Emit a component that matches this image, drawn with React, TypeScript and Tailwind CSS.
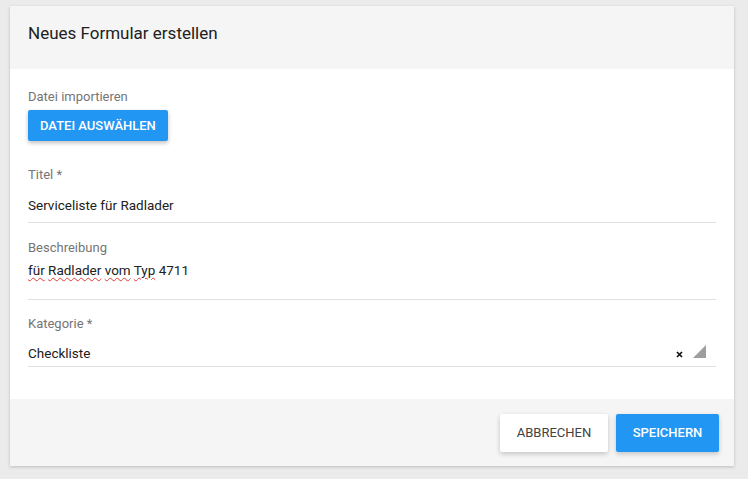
import React from "react";

export default function App() {
  return (
    <div
      className="w-[748px] h-[479px] bg-[#ebebeb] pt-[6px] pl-[10px]"
      style={{ fontFamily: "Roboto, 'Noto Sans', Arial, sans-serif" }}
    >
      <div className="w-[724px] bg-white shadow-[0_1px_3px_rgba(0,0,0,0.2)]">
        <div className="h-[63px] bg-[#f5f5f5] pt-[15px] px-[18px]">
          <div className="text-[17px] leading-[24px] text-[#212121]">Neues Formular erstellen</div>
        </div>
        <div className="px-[18px] pt-[20px] pb-[32px]">
          <div className="text-[13px] leading-[16px] text-[#757575]">Datei importieren</div>
          <button className="mt-[5px] h-[31px] px-[12px] bg-[#2196f3] text-white text-[13px] font-medium rounded-[2px] shadow-[0_2px_4px_rgba(0,0,0,0.25)]">
            DATEI AUSWÄHLEN
          </button>

          <div className="mt-[26px] text-[13px] leading-[16px] text-[#757575]">Titel *</div>
          <div className="pt-[14px] pb-[9px] border-b border-[#e0e0e0] text-[13.5px] leading-[16px] text-[#212121]">
            Serviceliste für Radlader
          </div>

          <div className="mt-[17px] text-[13px] leading-[16px] text-[#757575]">Beschreibung</div>
          <div className="pt-[6px] pb-[21px] border-b border-[#e0e0e0] text-[13.5px] leading-[16px] text-[#212121]">
            <span className="underline decoration-wavy decoration-[#e53935] decoration-1 underline-offset-[2px]">für</span>{" "}
            <span className="underline decoration-wavy decoration-[#e53935] decoration-1 underline-offset-[2px]">Radlader</span>{" "}
            <span className="underline decoration-wavy decoration-[#e53935] decoration-1 underline-offset-[2px]">vom</span>{" "}
            <span className="underline decoration-wavy decoration-[#e53935] decoration-1 underline-offset-[2px]">Typ</span> 4711
          </div>

          <div className="mt-[16px] text-[13px] leading-[16px] text-[#757575]">Kategorie *</div>
          <div className="pt-[13px] pb-[5px] border-b border-[#e0e0e0] text-[13.5px] leading-[16px] text-[#212121] flex items-center">
            <span className="flex-1">Checkliste</span>
            <svg width="7" height="7" viewBox="0 0 7 7" className="mr-[10px] mt-[3px]">
              <path d="M1 1 L6 6 M6 1 L1 6" stroke="#111" strokeWidth="1.7" />
            </svg>
            <svg width="13" height="13" viewBox="0 0 13 13" className="mr-[10px] -mt-[4px]">
              <path d="M13 0 L13 13 L0 13 Z" fill="#9e9e9e" />
            </svg>
          </div>
        </div>
        <div className="h-[67px] bg-[#f5f5f5] flex items-start justify-end pt-[15px] pr-[15px] gap-[8px]">
          <button className="h-[38px] w-[108px] bg-white text-[#424242] text-[13px] rounded-[2px] shadow-[0_2px_5px_rgba(0,0,0,0.2)]">
            ABBRECHEN
          </button>
          <button className="h-[38px] w-[103px] bg-[#2196f3] text-white text-[13px] font-medium rounded-[2px] shadow-[0_2px_5px_rgba(0,0,0,0.2)]">
            SPEICHERN
          </button>
        </div>
      </div>
    </div>
  );
}
